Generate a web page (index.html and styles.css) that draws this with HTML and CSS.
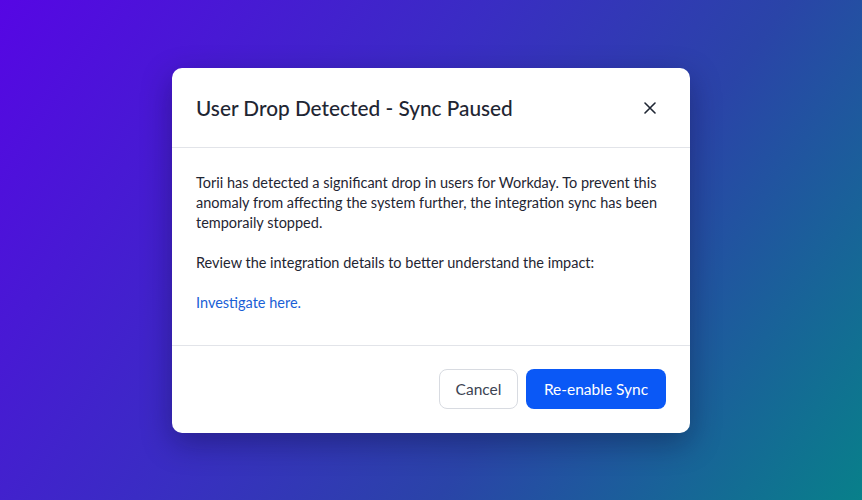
FILE: index.html
```html
<!DOCTYPE html>
<html lang="en">

<head>
    <meta charset="UTF-8">
    <meta name="viewport" content="width=device-width, initial-scale=1.0">
    <title>User Drop Detected</title>
    <link rel="stylesheet" href="styles.css">
</head>

<body>
    <div class="modal">
        <div class="modal-header">
            <h2 class="modal-title">User Drop Detected - Sync Paused</h2>
            <button class="close-btn" aria-label="Close">
                <svg width="12" height="12" viewBox="0 0 12 12">
                    <path d="M1 1 L11 11 M11 1 L1 11" stroke="#1f2633" stroke-width="1.6" stroke-linecap="round" />
                </svg>
            </button>
        </div>

        <div class="modal-body">
            <p>Torii has detected a significant drop in users for Workday. To prevent this anomaly from affecting the system further, the integration sync has been temporaily stopped.</p>
            <p>Review the integration details to better understand the impact:</p>
            <p><a href="#" class="link">Investigate here.</a></p>
        </div>

        <div class="modal-footer">
            <button class="btn btn-secondary">Cancel</button>
            <button class="btn btn-primary">Re-enable Sync</button>
        </div>
    </div>
</body>

</html>
```

FILE: styles.css
```css
* {
    margin: 0;
    padding: 0;
    box-sizing: border-box;
}

body {
    font-family: Lato, "Noto Sans", sans-serif;
    width: 862px;
    height: 500px;
    overflow: hidden;
    background: linear-gradient(125deg, #5606e4 0%, #3a2cc4 40%, #2a44a8 65%, #08808a 100%);
    display: flex;
    justify-content: center;
    padding-top: 68px;
}

.modal {
    width: 518px;
    height: 365px;
    background: #fff;
    border-radius: 10px;
    box-shadow: 0 10px 30px rgba(10, 10, 40, 0.35);
    display: flex;
    flex-direction: column;
}

.modal-header {
    display: flex;
    align-items: center;
    justify-content: space-between;
    padding: 0 34px 0 24px;
    height: 80px;
    border-bottom: 1px solid #e2e4e9;
}

.modal-title {
    font-size: 20.8px;
    font-weight: 500;
    color: #1f2633;
}

.close-btn {
    background: none;
    border: none;
    display: flex;
    cursor: pointer;
}

.modal-body {
    padding: 25px 24px 0;
    height: 198px;
    border-bottom: 1px solid #e2e4e9;
    font-size: 14.5px;
    line-height: 20px;
    color: #1f2633;
}

.modal-body p {
    margin-bottom: 20px;
}

.link {
    color: #1a5fd6;
    text-decoration: none;
}

.modal-footer {
    display: flex;
    justify-content: flex-end;
    gap: 8px;
    padding: 23px 24px;
}

.btn {
    font-family: inherit;
    font-size: 15.5px;
    height: 40px;
    border-radius: 8px;
    cursor: pointer;
}

.btn-secondary {
    width: 79px;
    background: #fff;
    color: #3d4452;
    border: 1px solid #d8dbe1;
}

.btn-primary {
    width: 140px;
    background: #0a58f6;
    color: #fff;
    border: none;
}
```
